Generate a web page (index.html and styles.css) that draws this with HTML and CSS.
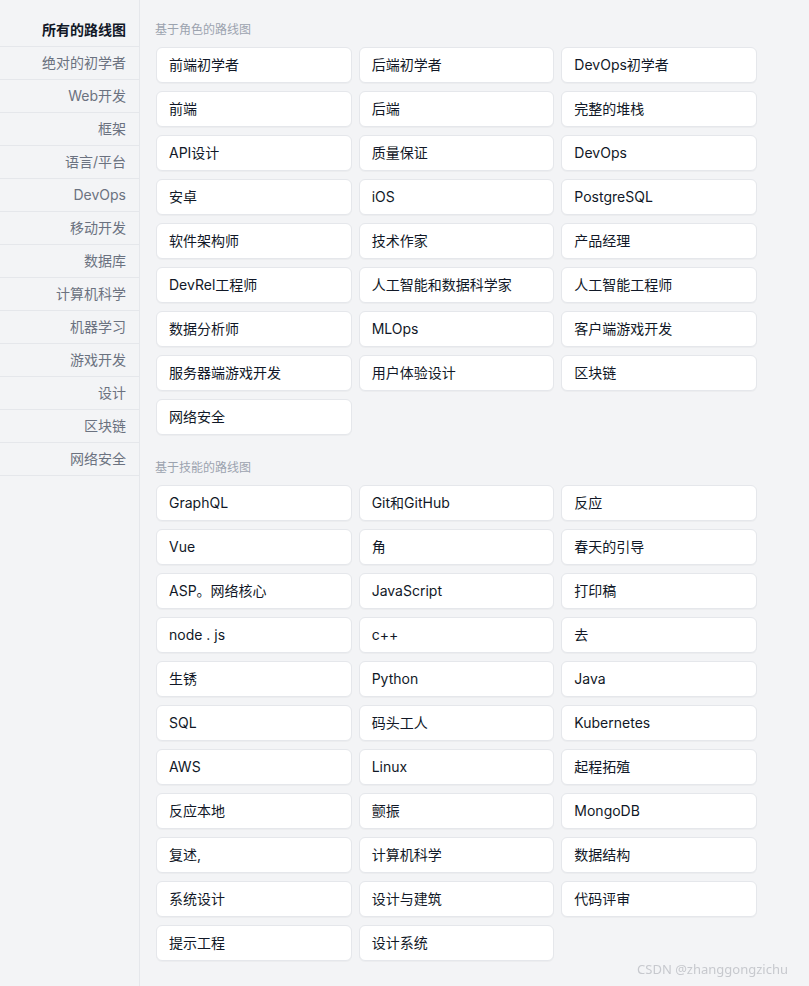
FILE: index.html
```html
<!DOCTYPE html>
<html lang="zh">
<head>
<meta charset="utf-8">
<title>路线图</title>
<link rel="stylesheet" href="styles.css">
</head>
<body>
<div class="layout">
  <nav class="sidebar">
    <a class="nav-item active">所有的路线图</a>
    <a class="nav-item">绝对的初学者</a>
    <a class="nav-item">Web开发</a>
    <a class="nav-item">框架</a>
    <a class="nav-item">语言/平台</a>
    <a class="nav-item">DevOps</a>
    <a class="nav-item">移动开发</a>
    <a class="nav-item">数据库</a>
    <a class="nav-item">计算机科学</a>
    <a class="nav-item">机器学习</a>
    <a class="nav-item">游戏开发</a>
    <a class="nav-item">设计</a>
    <a class="nav-item">区块链</a>
    <a class="nav-item">网络安全</a>
  </nav>
  <main class="content">
    <section class="group">
      <h2 class="group-title">基于角色的路线图</h2>
      <div class="grid">
        <a class="card">前端初学者</a>
        <a class="card">后端初学者</a>
        <a class="card">DevOps初学者</a>
        <a class="card">前端</a>
        <a class="card">后端</a>
        <a class="card">完整的堆栈</a>
        <a class="card">API设计</a>
        <a class="card">质量保证</a>
        <a class="card">DevOps</a>
        <a class="card">安卓</a>
        <a class="card">iOS</a>
        <a class="card">PostgreSQL</a>
        <a class="card">软件架构师</a>
        <a class="card">技术作家</a>
        <a class="card">产品经理</a>
        <a class="card">DevRel工程师</a>
        <a class="card">人工智能和数据科学家</a>
        <a class="card">人工智能工程师</a>
        <a class="card">数据分析师</a>
        <a class="card">MLOps</a>
        <a class="card">客户端游戏开发</a>
        <a class="card">服务器端游戏开发</a>
        <a class="card">用户体验设计</a>
        <a class="card">区块链</a>
        <a class="card">网络安全</a>
      </div>
    </section>
    <section class="group group-second">
      <h2 class="group-title">基于技能的路线图</h2>
      <div class="grid">
        <a class="card">GraphQL</a>
        <a class="card">Git和GitHub</a>
        <a class="card">反应</a>
        <a class="card">Vue</a>
        <a class="card">角</a>
        <a class="card">春天的引导</a>
        <a class="card">ASP。网络核心</a>
        <a class="card">JavaScript</a>
        <a class="card">打印稿</a>
        <a class="card">node . js</a>
        <a class="card">c++</a>
        <a class="card">去</a>
        <a class="card">生锈</a>
        <a class="card">Python</a>
        <a class="card">Java</a>
        <a class="card">SQL</a>
        <a class="card">码头工人</a>
        <a class="card">Kubernetes</a>
        <a class="card">AWS</a>
        <a class="card">Linux</a>
        <a class="card">起程拓殖</a>
        <a class="card">反应本地</a>
        <a class="card">颤振</a>
        <a class="card">MongoDB</a>
        <a class="card">复述,</a>
        <a class="card">计算机科学</a>
        <a class="card">数据结构</a>
        <a class="card">系统设计</a>
        <a class="card">设计与建筑</a>
        <a class="card">代码评审</a>
        <a class="card">提示工程</a>
        <a class="card">设计系统</a>
      </div>
    </section>
  </main>
</div>
<div class="watermark">CSDN @zhanggongzichu</div>
</body>
</html>
```

FILE: styles.css
```css
* { box-sizing: border-box; }
html, body {
  margin: 0;
  padding: 0;
  background: #f3f4f6;
  font-family: Inter, "Noto Sans CJK SC", sans-serif;
  color: #111827;
}
.layout {
  display: flex;
  min-height: 100vh;
}
.sidebar {
  width: 140px;
  flex: none;
  border-right: 1px solid #e5e7eb;
  padding-top: 14px;
  display: flex;
  flex-direction: column;
}
.nav-item {
  display: block;
  height: 33px;
  line-height: 32px;
  border-bottom: 1px solid #e5e7eb;
  text-align: right;
  padding-right: 13px;
  font-size: 14px;
  color: #6b7280;
  text-decoration: none;
}
.nav-item.active {
  color: #111827;
  font-weight: 700;
}
.content {
  padding: 21px 0 24px 16px;
  width: 617px;
}
.group-title {
  margin: 0 0 8px -1px;
  font-size: 12px;
  line-height: 18px;
  font-weight: 400;
  color: #9ca3af;
}
.group-second { margin-top: 24px; }
.grid {
  display: grid;
  grid-template-columns: repeat(3, 1fr);
  gap: 8px 7px;
}
.card {
  display: block;
  height: 36px;
  line-height: 20px;
  padding: 7px 12px;
  background: #fff;
  border: 1px solid #e5e7eb;
  border-radius: 6px;
  box-shadow: 0 1px 1px rgba(0,0,0,0.03);
  font-size: 14px;
  color: #111827;
  text-decoration: none;
  white-space: nowrap;
}
.watermark {
  position: fixed;
  right: 21px;
  bottom: 8px;
  font-size: 13px;
  color: #c7c9ce;
  font-family: "Noto Sans", "Noto Sans CJK SC", sans-serif;
}
```
